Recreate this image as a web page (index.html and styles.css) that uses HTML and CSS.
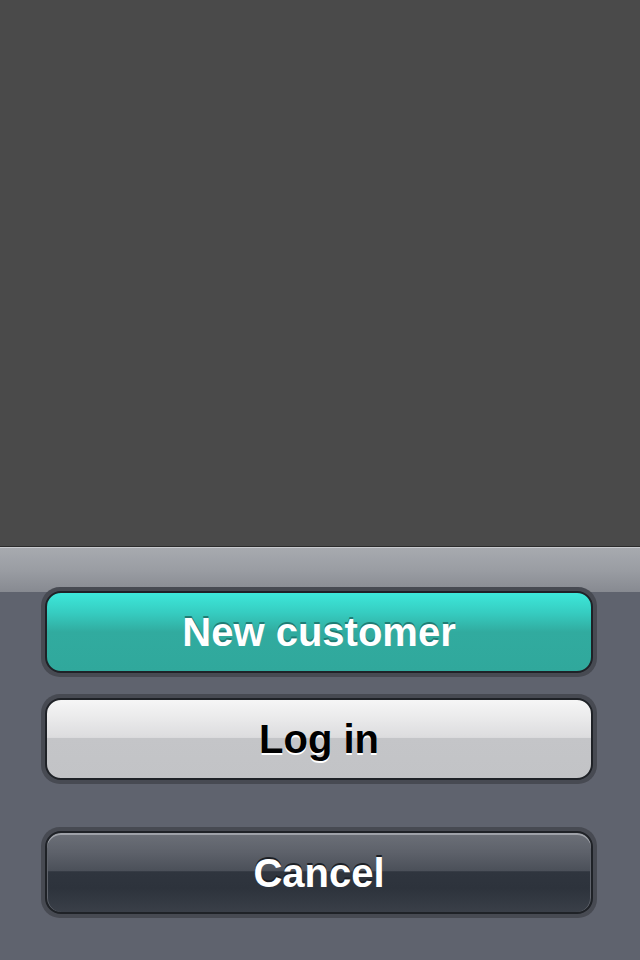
FILE: index.html
```html
<!DOCTYPE html>
<html>
<head>
<meta charset="utf-8">
<link rel="stylesheet" href="styles.css">
</head>
<body>
<div class="screen">
  <div class="stage"></div>
  <div class="sheet">
    <div class="toolbar"></div>
    <div class="actions">
      <div class="well"><button class="btn btn-teal">New customer</button></div>
      <div class="well"><button class="btn btn-light">Log in</button></div>
      <div class="well well-cancel"><button class="btn btn-dark">Cancel</button></div>
    </div>
  </div>
</div>
</body>
</html>
```
FILE: styles.css
```css
html, body {
  margin: 0;
  padding: 0;
}
body {
  width: 640px;
  height: 960px;
  overflow: hidden;
  background: #5f636e;
  font-family: "Liberation Sans", Arial, sans-serif;
}
.screen {
  display: flex;
  flex-direction: column;
  height: 960px;
}
.stage {
  height: 546px;
  background: #4a4a4a;
  border-bottom: 1px solid #2c2c2c;
}
.sheet {
  flex: 1;
  background: #5f636e;
}
.toolbar {
  height: 44px;
  border-top: 1px solid #c9cbcf;
  background: linear-gradient(to bottom, #a7aaaf 0%, #9a9da3 50%, #878a91 100%);
}
.actions {
  display: flex;
  flex-direction: column;
  margin-top: -5px;
  padding-left: 41px;
}
.well {
  width: 556px;
  height: 90px;
  box-sizing: border-box;
  padding: 4px 4px 4px 4px;
  border-radius: 19px;
  background: #474a52;
  margin-bottom: 17px;
}
.well-cancel {
  margin-top: 26px;
  height: 91px;
}
.btn {
  display: block;
  width: 100%;
  height: 100%;
  box-sizing: border-box;
  border: 2px solid #1f2227;
  border-radius: 16px;
  margin: 0;
  padding: 0;
  font-family: "Liberation Sans", Arial, sans-serif;
  font-weight: bold;
  font-size: 40px;
  line-height: 1;
  text-align: center;
  cursor: pointer;
}
.btn-teal {
  color: #ffffff;
  text-shadow: 0 -2px 0 #1f7d74;
  background: linear-gradient(to bottom, #3de8da 0%, #36cdc1 25%, #31ab9f 50%, #30a89c 100%);
}
.btn-light {
  color: #000000;
  text-shadow: 0 2px 0 #ffffff;
  background: linear-gradient(to bottom, #f6f6f6 0%, #e9e9ea 25%, #dcdcde 48%, #c4c5c8 49%, #c2c3c6 100%);
}
.btn-dark {
  color: #ffffff;
  text-shadow: 0 -2px 0 #1c1f25;
  box-shadow: inset 0 2px 0 #9ea1a8, inset 1px 0 0 #5f636b, inset -1px 0 0 #5f636b;
  background: linear-gradient(to bottom, #6c7078 0%, #5d616a 25%, #4b5059 48%, #2f353e 49%, #2d333c 70%, #3a3f48 100%);
}
```
